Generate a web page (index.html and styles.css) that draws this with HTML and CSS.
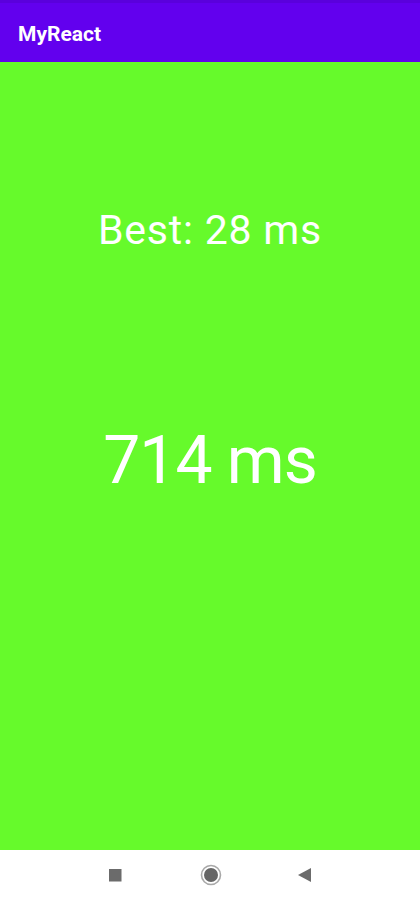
FILE: index.html
```html
<!DOCTYPE html>
<html lang="en">
<head>
    <meta charset="UTF-8">
    <meta name="viewport" content="width=device-width, initial-scale=1.0">
    <title>MyReact</title>
    <link rel="stylesheet" href="styles.css">
</head>
<body>
    <div class="app">
        <header class="app-bar">
            <span class="app-title">MyReact</span>
        </header>
        <main class="screen">
            <div class="best">Best: 28 ms</div>
            <div class="result">714 ms</div>
        </main>
        <!-- android navigation bar -->
        <nav class="nav-bar">
            <svg class="nav-icon nav-recent" width="14" height="14" viewBox="0 0 14 14">
                <rect x="1" y="1" width="12.5" height="12.5" fill="#6b6b6b"/>
            </svg>
            <svg class="nav-icon nav-home" width="24" height="24" viewBox="0 0 24 24">
                <circle cx="12" cy="12" r="9.5" fill="none" stroke="#a8a8a8" stroke-width="1.6"/>
                <circle cx="12" cy="12" r="7" fill="#666666"/>
            </svg>
            <svg class="nav-icon nav-back" width="16" height="16" viewBox="0 0 16 16">
                <polygon points="15,1 15,15 2,8" fill="#6b6b6b"/>
            </svg>
        </nav>
    </div>
</body>
</html>
```

FILE: styles.css
```css
body {
    margin: 0;
    padding: 0;
    font-family: Roboto, "Liberation Sans", sans-serif;
    background-color: #ffffff;
}

.app {
    display: flex;
    flex-direction: column;
    height: 900px;
}

.app-bar {
    height: 62px;
    background-color: #6200ee;
    display: flex;
    align-items: center;
    padding-left: 18px;
    box-sizing: border-box;
    box-shadow: inset 0 3px 0 #5a00dc;
}

.app-title {
    color: #ffffff;
    font-size: 21px;
    font-weight: 700;
    margin-top: 5px;
}

.screen {
    flex: 1;
    background-color: #66fa2b;
    display: flex;
    flex-direction: column;
    align-items: center;
    color: #ffffff;
}

.best {
    font-size: 41px;
    line-height: 48px;
    letter-spacing: 0.8px;
    margin-top: 144px;
}

.result {
    font-size: 66px;
    line-height: 78px;
    letter-spacing: -1px;
    margin-top: 168px;
}

.nav-bar {
    height: 50px;
    background-color: #ffffff;
    display: flex;
    align-items: center;
    padding-left: 108px;
}

.nav-icon {
    display: block;
}

.nav-home {
    margin-left: 77px;
}

.nav-back {
    margin-left: 73px;
}
```
